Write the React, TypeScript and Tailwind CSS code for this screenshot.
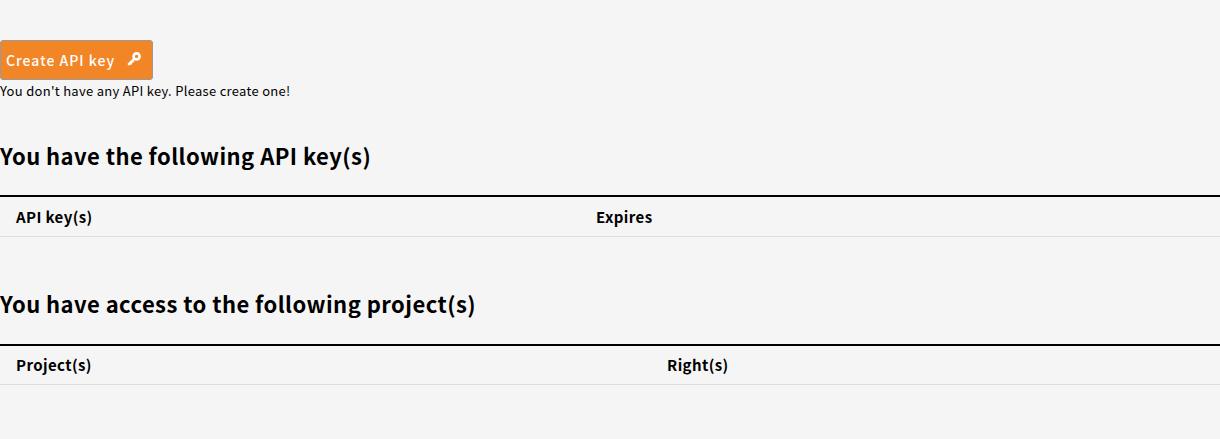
const font = "font-['Noto_Sans_CJK_JP',sans-serif]";

function KeyIcon() {
  return (
    <svg viewBox="0 0 14 14" className="ml-[12px] h-[14px] w-[14px] -translate-y-[1px]" fill="none" stroke="currentColor">
      <circle cx="9.6" cy="4.4" r="3" strokeWidth="2.6" />
      <path d="M7.4 6.6 1.2 12.8" strokeWidth="2.4" />
      <path d="M2.6 10.4l2 2M4.8 8.4l1.8 1.8" strokeWidth="2" />
    </svg>
  );
}

function KeyTable({ title, first, second, firstWidth, tableGap, cellPad }: { title: string; first: string; second: string; firstWidth: string; tableGap: string; cellPad: string }) {
  return (
    <section>
      <h2 className="text-[22px] leading-[30px] font-semibold text-black tracking-[0.45px]">{title}</h2>
      <table className={`${tableGap} w-full table-fixed border-t-2 border-black`}>
        <thead>
          <tr className="border-b border-[#dddddd]">
            <th className={`${firstWidth} ${cellPad} h-[40px] pl-4 text-left text-[15px] font-semibold tracking-[0.4px] text-black`}>{first}</th>
            <th className={`${cellPad} h-[40px] pl-4 text-left text-[15px] font-semibold tracking-[0.4px] text-black`}>{second}</th>
          </tr>
        </thead>
      </table>
    </section>
  );
}

export default function App() {
  return (
    <main className={`${font} h-[439px] overflow-hidden bg-[#f5f5f5] pt-10`}>
      <button className="flex h-10 w-[153px] items-center rounded-[3px] border border-[#999999] bg-[#f28627] pl-[5px] text-[14px] font-medium tracking-[1px] text-white">
        Create API key
        <KeyIcon />
      </button>
      <p className="h-[22px] text-[13px] leading-[22px] tracking-[0.29px] text-black">You don't have any API key. Please create one!</p>
      <div className="mt-[38px] flex flex-col gap-[51px]">
        <KeyTable title="You have the following API key(s)" first="API key(s)" second="Expires" firstWidth="w-[580px]" tableGap="mt-[25px]" cellPad="pt-[2px]" />
        <KeyTable title="You have access to the following project(s)" first="Project(s)" second="Right(s)" firstWidth="w-[651px]" tableGap="mt-[26px]" cellPad="pt-0" />
      </div>
    </main>
  );
}
